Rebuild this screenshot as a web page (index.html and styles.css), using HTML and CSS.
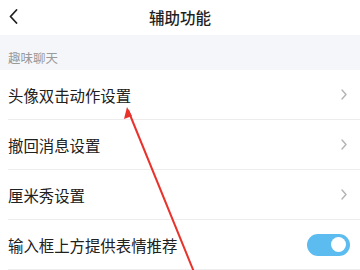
FILE: index.html
```html
<!DOCTYPE html>
<html lang="zh">
<head>
<meta charset="utf-8">
<link rel="stylesheet" href="styles.css">
</head>
<body>
<div class="page">
  <header class="topbar">
    <svg class="back" width="9" height="15" viewBox="0 0 9 15"><polyline points="7.5,1 1.5,7.5 7.5,14" fill="none" stroke="#222" stroke-width="1.8" stroke-linecap="round" stroke-linejoin="round"/></svg>
    <div class="title">辅助功能</div>
  </header>
  <div class="section">趣味聊天</div>
  <div class="list">
    <div class="row"><span class="label">头像双击动作设置</span><svg class="chev" width="6" height="11" viewBox="0 0 6 11"><polyline points="1,1 5,5.5 1,10" fill="none" stroke="#b3b3b3" stroke-width="1.4" stroke-linecap="round" stroke-linejoin="round"/></svg></div>
    <div class="row"><span class="label">撤回消息设置</span><svg class="chev" width="6" height="11" viewBox="0 0 6 11"><polyline points="1,1 5,5.5 1,10" fill="none" stroke="#b3b3b3" stroke-width="1.4" stroke-linecap="round" stroke-linejoin="round"/></svg></div>
    <div class="row"><span class="label">厘米秀设置</span><svg class="chev" width="6" height="11" viewBox="0 0 6 11"><polyline points="1,1 5,5.5 1,10" fill="none" stroke="#b3b3b3" stroke-width="1.4" stroke-linecap="round" stroke-linejoin="round"/></svg></div>
    <div class="row"><span class="label">输入框上方提供表情推荐</span><div class="toggle"><div class="knob"></div></div></div>
  </div>
  <svg class="arrow" width="360" height="270" viewBox="0 0 360 270">
    <line x1="128" y1="110" x2="194" y2="272" stroke="#e8322b" stroke-width="2"/>
    <polygon points="127,107 124,119 132,116" fill="#e8322b"/>
  </svg>
</div>
</body>
</html>
```
FILE: styles.css
```css
html, body {
  margin: 0;
  padding: 0;
  background: #ffffff;
}
.page {
  position: relative;
  width: 360px;
  height: 270px;
  overflow: hidden;
  font-family: "Noto Sans CJK SC", "Noto Sans", sans-serif;
}
.topbar {
  height: 35px;
  display: flex;
  align-items: center;
  justify-content: center;
  position: relative;
  background: #ffffff;
}
.back {
  position: absolute;
  left: 9px;
  top: 9px;
}
.title {
  font-size: 15.5px;
  font-weight: 500;
  color: #1f1f1f;
  line-height: 20px;
  margin-top: -2px;
}
.section {
  height: 35px;
  background: #f5f6fa;
  color: #9a9a9a;
  font-size: 12.5px;
  line-height: 14px;
  padding-left: 8px;
  display: flex;
  align-items: flex-end;
  padding-bottom: 5px;
  box-sizing: border-box;
}
.list {
  background: #ffffff;
}
.row {
  height: 50px;
  margin-left: 8px;
  padding-right: 13px;
  border-bottom: 1px solid #ededed;
  box-sizing: border-box;
  display: flex;
  align-items: center;
  justify-content: space-between;
}
.label {
  font-size: 15.4px;
  color: #202020;
  line-height: 20px;
}
.chev {
  display: block;
}
.toggle {
  width: 43px;
  height: 22px;
  border-radius: 11px;
  background: #5cbcf0;
  margin-right: -3px;
  display: flex;
  align-items: center;
  justify-content: flex-end;
  padding-right: 4px;
  box-sizing: border-box;
}
.knob {
  width: 15px;
  height: 15px;
  border-radius: 50%;
  background: #ffffff;
}
.arrow {
  position: absolute;
  left: 0;
  top: 0;
  pointer-events: none;
}
```
